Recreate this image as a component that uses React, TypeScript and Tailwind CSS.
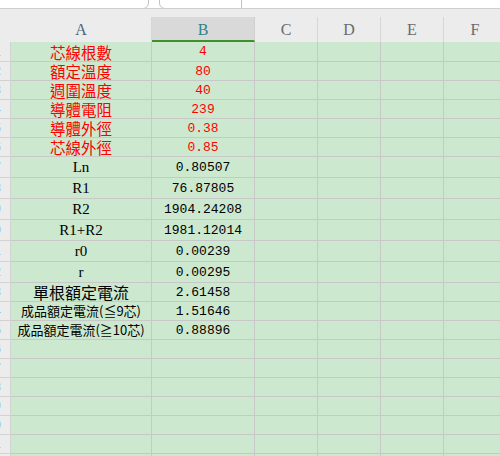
import React from 'react';

type Row = { label: string; value: string; kind: 'red' | 'latin' | 'cjk' | 'small' | 'empty'; h: number };

const rows: Row[] = [
  { label: '芯線根數', value: '4', kind: 'red', h: 20 },
  { label: '額定溫度', value: '80', kind: 'red', h: 19 },
  { label: '週圍溫度', value: '40', kind: 'red', h: 19 },
  { label: '導體電阻', value: '239', kind: 'red', h: 19 },
  { label: '導體外徑', value: '0.38', kind: 'red', h: 19 },
  { label: '芯線外徑', value: '0.85', kind: 'red', h: 19 },
  { label: 'Ln', value: '0.80507', kind: 'latin', h: 21 },
  { label: 'R1', value: '76.87805', kind: 'latin', h: 21 },
  { label: 'R2', value: '1904.24208', kind: 'latin', h: 21 },
  { label: 'R1+R2', value: '1981.12014', kind: 'latin', h: 21 },
  { label: 'r0', value: '0.00239', kind: 'latin', h: 21 },
  { label: 'r', value: '0.00295', kind: 'latin', h: 21 },
  { label: '單根額定電流', value: '2.61458', kind: 'cjk', h: 19 },
  { label: '成品額定電流(≦9芯)', value: '1.51646', kind: 'small', h: 19 },
  { label: '成品額定電流(≧10芯)', value: '0.88896', kind: 'small', h: 19 },
  ...Array.from({ length: 8 }, () => ({ label: '', value: '', kind: 'empty' as const, h: 19 })),
];

const labelClass: Record<Row['kind'], string> = {
  red: "font-['Noto_Sans_CJK_TC',sans-serif] text-[15.5px] leading-[16px] text-[#ff0000]",
  latin: "font-['Liberation_Serif',serif] text-[15px] leading-[17px] text-black",
  cjk: "font-['Noto_Sans_CJK_TC',sans-serif] text-[16px] leading-[17px] text-black",
  small: "font-['Noto_Sans_CJK_TC',sans-serif] text-[13px] leading-[16px] text-black",
  empty: '',
};

const cols = ['C', 'D', 'E', 'F'];

export default function App() {
  return (
    <div className="w-[500px] h-[456px] overflow-hidden bg-[#ececec] select-none">
      {/* toolbar remnant */}
      <div className="h-[9px] bg-white border-b border-[#cfcfcf] flex items-end overflow-hidden">
        <div className="ml-[-8px] w-[157px] h-[22px] shrink-0 rounded-md border border-[#c2c2c2] bg-white flex pl-[55px] -mb-px">
          <span className="font-['Liberation_Sans',sans-serif] text-[14px] leading-[14px] text-[#222] mt-[-3px]">B17</span>
        </div>
        <div className="ml-[10px] flex-1 h-[22px] rounded-md border border-[#c2c2c2] bg-white flex -mb-px mr-[-10px]">
          <div className="w-[82px] border-r border-[#c2c2c2] flex gap-[14px] pl-[24px]">
            <span className="font-['Liberation_Sans',sans-serif] text-[13px] leading-[13px] text-[#555] mt-[-3px]">Q</span>
            <span className="font-['Liberation_Serif',serif] italic text-[13px] leading-[13px] text-[#555] mt-[-3px]">fx</span>
          </div>
        </div>
      </div>

      <div className="h-[8px]" />

      {/* column headers */}
      <div className="flex h-[25px] font-['Liberation_Serif',serif] text-[16px]">
        <div className="w-[11px] shrink-0" />
        <div className="w-[141px] shrink-0 border-r border-[#d6d6d6] flex items-center justify-center text-[#4f6478]">A</div>
        <div className="w-[103px] shrink-0 bg-[#d9d9d9] border-r border-[#d0d0d0] border-b-2 border-b-[#3f8f2d] flex items-center justify-center text-[#2f8489] pt-[2px]">B</div>
        {cols.map((c) => (
          <div key={c} className="w-[63px] shrink-0 border-r border-[#d6d6d6] flex items-center justify-center text-[#6a6a6a]">
            {c}
          </div>
        ))}
      </div>

      {/* grid */}
      {rows.map((row, i) => (
        <div key={i} className="flex" style={{ height: row.h }}>
          <div className="w-[11px] shrink-0 bg-[#ececec] border-r border-b border-[#d2d2d2] flex items-center justify-end overflow-hidden">
            <span className="shrink-0 mr-[9px] font-['Liberation_Sans',sans-serif] text-[12px] text-[#8dbbe8]">{i + 1}</span>
          </div>
          <div className="w-[141px] shrink-0 bg-[#cce8cf] border-r border-b border-[#c8c8c8] flex items-center justify-center whitespace-nowrap overflow-hidden">
            <span className={labelClass[row.kind]}>{row.label}</span>
          </div>
          <div
            className={`w-[103px] shrink-0 bg-[#cce8cf] border-r border-b border-[#c8c8c8] flex items-center justify-center font-['Liberation_Mono',monospace] text-[13px] leading-none ${
              row.kind === 'red' ? 'text-[#ff0000]' : 'text-black'
            }`}
          >
            {row.value}
          </div>
          {cols.map((c) => (
            <div key={c} className="w-[63px] shrink-0 bg-[#cce8cf] border-r border-b border-[#c8c8c8]" />
          ))}
        </div>
      ))}
    </div>
  );
}
